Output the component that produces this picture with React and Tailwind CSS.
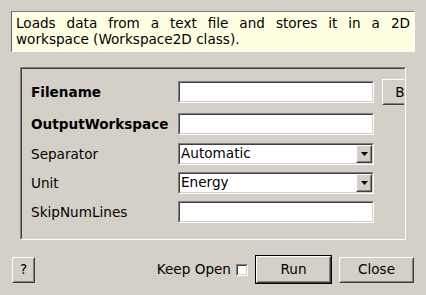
import React from "react";

function Raised({ className = "", children }) {
  return (
    <div className={`border border-t-white border-l-white border-b-[#404040] border-r-[#404040] bg-[#d4d0c8] ${className}`}>
      <div className="w-full h-full border border-t-[#d4d0c8] border-l-[#d4d0c8] border-b-[#808080] border-r-[#808080] flex items-center justify-center">
        {children}
      </div>
    </div>
  );
}

function Sunken({ className = "", children }) {
  return (
    <div className={`border border-t-[#808080] border-l-[#808080] border-b-white border-r-white ${className}`}>
      <div className="w-full h-full border border-t-[#404040] border-l-[#404040] border-b-[#d4d0c8] border-r-[#d4d0c8] bg-white flex items-center">
        {children}
      </div>
    </div>
  );
}

function Combo({ value }) {
  return (
    <Sunken className="w-[196px] h-[22px]">
      <span className="flex-1 pl-[1px] leading-none">{value}</span>
      <Raised className="w-[16px] h-full">
        <svg width="7" height="4" viewBox="0 0 7 4">
          <polygon points="0,0 7,0 3.5,4" fill="#000" />
        </svg>
      </Raised>
    </Sunken>
  );
}

export default function App() {
  return (
    <div className="w-[426px] h-[295px] bg-[#d4d0c8] overflow-hidden font-['DejaVu_Sans',sans-serif] text-[13.6px] text-black flex flex-col">
      <div className="mt-[11px] ml-[11px] w-[404px] h-[41px] bg-[#ffffe1] border border-t-[#808080] border-l-[#606060] border-b-white border-r-white pl-[4px] pr-[4px] pt-[3px] leading-[16px] text-justify">
        Loads data from a text file and stores it in a 2D workspace (Workspace2D class).
      </div>

      <div className="mt-[15px] ml-[20px] w-[386px] h-[173px] border border-t-[#808080] border-l-[#808080] border-b-white border-r-white">
        <div className="w-full h-full border border-t-[#404040] border-l-[#404040] border-b-[#d4d0c8] border-r-[#d4d0c8] overflow-hidden pl-[9px] pt-[10px] flex flex-col">
          <div className="flex items-center h-[26px]">
            <div className="w-[147px] shrink-0 font-bold">Filename</div>
            <Sunken className="w-[196px] h-[22px] shrink-0" />
            <Raised className="ml-[8px] w-[76px] h-[26px] shrink-0">
              <span>Browse</span>
            </Raised>
          </div>
          <div className="flex items-center h-[22px] mt-[8px]">
            <div className="w-[147px] shrink-0 font-bold">OutputWorkspace</div>
            <Sunken className="w-[196px] h-[22px] shrink-0" />
          </div>
          <div className="flex items-center h-[22px] mt-[8px]">
            <div className="w-[147px] shrink-0">Separator</div>
            <Combo value="Automatic" />
          </div>
          <div className="flex items-center h-[22px] mt-[7px]">
            <div className="w-[147px] shrink-0">Unit</div>
            <Combo value="Energy" />
          </div>
          <div className="flex items-center h-[22px] mt-[7px]">
            <div className="w-[147px] shrink-0">SkipNumLines</div>
            <Sunken className="w-[196px] h-[22px] shrink-0" />
          </div>
        </div>
      </div>

      <div className="mt-[15px] h-[29px] flex items-center pl-[12px] pr-[12px]">
        <Raised className="w-[23px] h-[26px]">
          <span>?</span>
        </Raised>
        <div className="flex-1" />
        <span>Keep Open</span>
        <div className="ml-[5px] w-[12px] h-[12px] border border-t-[#808080] border-l-[#808080] border-b-white border-r-white">
          <div className="w-full h-full border border-t-[#404040] border-l-[#404040] border-b-[#d4d0c8] border-r-[#d4d0c8] bg-white" />
        </div>
        <div className="ml-[7px] border border-black">
          <Raised className="w-[75px] h-[27px]">
            <span>Run</span>
          </Raised>
        </div>
        <Raised className="ml-[7px] w-[75px] h-[26px]">
          <span>Close</span>
        </Raised>
      </div>
    </div>
  );
}
